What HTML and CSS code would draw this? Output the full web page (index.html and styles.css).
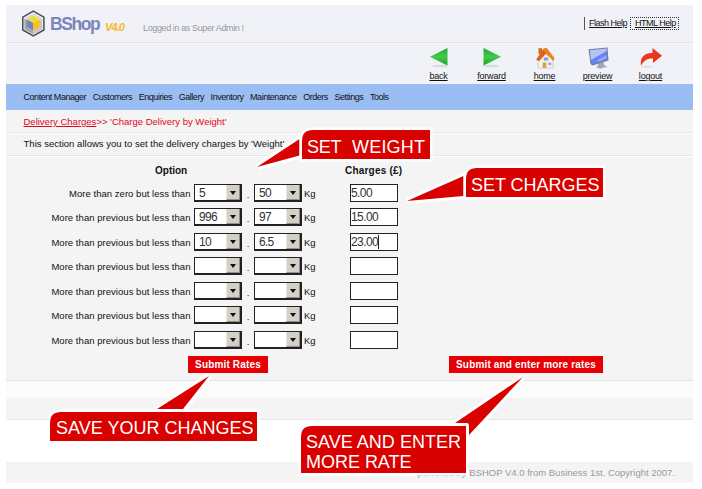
FILE: index.html
```html
<!DOCTYPE html>
<html lang="en">
<head>
<meta charset="utf-8">
<title>BShop V4.0</title>
<link rel="stylesheet" href="styles.css">
</head>
<body>
<div class="page">
  <header class="top">
    <svg class="logo" width="24" height="28" viewBox="0 0 24 28">
      <path d="M11.300 1.200 21.900 7.200V20L11.300 26 .8 20V7.200Z" fill="#f4f4f6" stroke="#4c4c54" stroke-width="1.500"/>
      <path d="M11.300 3 20.300 8 17.800 9.800 11.300 6.300 5 9.800 2.400 8Z" fill="#dcdce0"/>
      <path d="M2.400 8.500 5 10V17.500L11.300 21V24.300L2.400 19.300Z" fill="#a2a2a8"/>
      <path d="M11.300 21 17.800 17.500V10L20.300 8.500V19.300L11.300 24.300Z" fill="#c4c4ca"/>
      <path d="M11.300 5.800 17.800 9.400 11.300 13 5 9.400Z" fill="#e8e02c"/>
      <path d="M5 9.400 11.300 13V20.800L5 17.200Z" fill="#7482c4"/>
      <path d="M17.800 9.400 11.300 13V20.800L17.800 17.200Z" fill="#fdbd17"/>
    </svg>
    <span class="brand">BShop</span><span class="version">V4.0</span>
    <span class="login">Logged in as Super Admin !</span>
    <div class="help"><a class="flash">Flash Help</a><a class="htmlhelp">HTML Help</a></div>
  </header>
  <div class="toolbar">
    <a class="tool"><svg width="24" height="22" viewBox="0 0 24 22"><defs><linearGradient id="g" x1="0" y1="0" x2="0" y2="1"><stop offset="0" stop-color="#22a536"/><stop offset=".5" stop-color="#45c94c"/><stop offset="1" stop-color="#16a32a"/></linearGradient></defs><ellipse cx="13" cy="19" rx="8" ry="1.300" fill="#d9dbde"/><path d="M20.500 1V18.500L3 9.800Z" fill="url(#g)"/></svg><span>back</span></a>
    <a class="tool"><svg width="24" height="22" viewBox="0 0 24 22"><ellipse cx="11" cy="19" rx="8" ry="1.300" fill="#d9dbde"/><path d="M3.500 1V18.500L21 9.800Z" fill="url(#g)"/></svg><span>forward</span></a>
    <a class="tool"><svg width="24" height="22" viewBox="0 0 24 22"><path d="M5 11 12.500 6.500 20 12V21H5Z" fill="#f3f1e9" stroke="#b9b5ae" stroke-width=".6"/><path d="M5.500 1.200H9V7H5.500Z" fill="#d2691e"/><path d="M3.300 12.500 10.500 1.500 13.500 .8 21.500 11 20.500 14 12.800 6.800 6 14Z" fill="#ee8128"/><path d="M3.300 12.500 10.300 2.500 12.800 6.800 6 14Z" fill="#d9641a"/><rect x="10.800" y="10.500" width="4.500" height="3" fill="#7e9fe8"/><rect x="9.700" y="15.500" width="3.600" height="5.500" fill="#d5a14b"/><rect x="15.300" y="15.500" width="3" height="2.500" fill="#8babe9"/></svg><span>home</span></a>
    <a class="tool"><svg width="24" height="22" viewBox="0 0 24 22"><path d="M13 16 17.500 15 18.500 18.500 21.500 19.500 14 21.700 10.500 20.500Z" fill="#a4a7b2"/><path d="M2.500 2.200 21.500 .5 22.500 13.500 6.500 18.500 4.500 17Z" fill="#747b97"/><path d="M3.800 3.300 20.500 1.600 20.800 13 6 17Z" fill="#6583f5"/><path d="M3.800 3.300 20.500 1.600 20.600 4 5 13Z" fill="#b3c4fb"/><path d="M10 14 20.700 8V11L14 14.500Z" fill="#93a9fb"/></svg><span>preview</span></a>
    <a class="tool"><svg width="24" height="22" viewBox="0 0 24 22"><ellipse cx="8" cy="19.800" rx="6" ry="1" fill="#dfdfe3"/><path d="M2 19C.5 10 6 5.700 13.500 6V1L23 8.700 14 16V11.500C8.500 11 4.500 13.500 2 19Z" fill="#e83821"/></svg><span>logout</span></a>
  </div>
  <nav class="menu"><a>Content Manager</a><a>Customers</a><a>Enquiries</a><a>Gallery</a><a>Inventory</a><a>Maintenance</a><a>Orders</a><a>Settings</a><a>Tools</a></nav>
  <div class="crumb"><p><u>Delivery Charges</u>&gt;&gt; 'Charge Delivery by Weight'</p></div>
  <div class="intro"><p>This section allows you to set the delivery charges by 'Weight'.</p></div>
  <main class="form">
    <div class="heads"><b class="h-option">Option</b><b class="h-charges">Charges (£)</b></div>
    <div class="row"><label>More than zero but less than</label><div class="select">5<i></i></div><span class="dot">.</span><div class="select">50<i></i></div><span class="unit">Kg</span><div class="field">5.00</div></div>
    <div class="row"><label>More than previous but less than</label><div class="select">996<i></i></div><span class="dot">.</span><div class="select">97<i></i></div><span class="unit">Kg</span><div class="field">15.00</div></div>
    <div class="row"><label>More than previous but less than</label><div class="select">10<i></i></div><span class="dot">.</span><div class="select">6.5<i></i></div><span class="unit">Kg</span><div class="field"><span class="caret">23.00</span></div></div>
    <div class="row"><label>More than previous but less than</label><div class="select"><i></i></div><span class="dot">.</span><div class="select"><i></i></div><span class="unit">Kg</span><div class="field"></div></div>
    <div class="row"><label>More than previous but less than</label><div class="select"><i></i></div><span class="dot">.</span><div class="select"><i></i></div><span class="unit">Kg</span><div class="field"></div></div>
    <div class="row"><label>More than previous but less than</label><div class="select"><i></i></div><span class="dot">.</span><div class="select"><i></i></div><span class="unit">Kg</span><div class="field"></div></div>
    <div class="row"><label>More than previous but less than</label><div class="select"><i></i></div><span class="dot">.</span><div class="select"><i></i></div><span class="unit">Kg</span><div class="field"></div></div>
    <div class="actions"><a class="btn save">Submit Rates</a><a class="btn more">Submit and enter more rates</a></div>
  </main>
  <div class="strip"></div>
  <div class="band"></div>
  <footer class="foot">powered by BSHOP V4.0 from Business 1st. Copyright 2007.</footer>
</div>
<svg class="callouts" width="702" height="489" viewBox="0 0 702 489">
  <g class="outline">
    <path d="M300 139 257 167 300 155.500Z"/><path d="M464 176 407 201 464 196Z"/>
    <path d="M157 410 209 376 183 410Z"/><path d="M454 424 523 377 468 436Z"/>
  </g>
  <g class="tail">
    <path d="M299.500 139 257 167 299.500 155.500Z"/><path d="M463.500 176 407 201 463.500 196Z"/>
    <path d="M157 409 209 376 183 409Z"/><path d="M455 423 523 377 469 435V425L467 423Z"/>
  </g>
  <g class="box">
    <path d="M302 159V141Q302 130 313 130H430V159Z"/><path d="M466 197V179Q466 168 477 168H603V197Z"/>
    <path d="M50 441V423Q50 412 61 412H257V441Z"/><path d="M301 473V437Q301 426 312 426H466V473Z"/>
  </g>
  <g class="words">
    <text x="307" y="153" textLength="34.500">SET</text><text x="352" y="153" textLength="73">WEIGHT</text>
    <text x="471" y="191" textLength="128.500">SET CHARGES</text>
    <text x="56" y="434" textLength="197.500">SAVE YOUR CHANGES</text>
    <text x="306" y="448" textLength="155">SAVE AND ENTER</text>
    <text x="306" y="468" textLength="105.500">MORE RATE</text>
  </g>
</svg>
</body>
</html>
```
FILE: styles.css
```css
* { box-sizing: border-box; }
body {
  margin: 0;
  width: 702px;
  height: 489px;
  overflow: hidden;
  background: #fff;
  color: #111;
  font-family: "Liberation Sans", Arial, sans-serif;
  font-size: 9.5px;
  white-space: nowrap;
}
p { margin: 0; }
.page { width: 687px; margin-left: 6px; padding-top: 5px; }
.top {
  display: flex;
  height: 38px;
  padding: 5px 14px 0 16px;
  background: #f1f2f7;
  border-bottom: 1px solid #e2e3e7;
}
.logo { flex: none; }
.brand {
  width: 55px;
  margin-left: 4px;
  padding-top: 4px;
  color: #7c86bd;
  font-size: 17.5px;
  font-weight: bold;
  letter-spacing: -1.4px;
  line-height: 21px;
}
.version {
  width: 38px;
  padding-top: 11px;
  color: #fbb62a;
  font-size: 11px;
  font-weight: bold;
  font-style: italic;
  letter-spacing: -.9px;
  line-height: 13px;
}
.login { padding-top: 12px; color: #96979c; font-size: 9px; letter-spacing: -.38px; line-height: 12px; }
.help { display: flex; margin-left: auto; padding-top: 7px; font-size: 9px; letter-spacing: -.5px; text-decoration: underline; }
.help a { height: 13px; line-height: 13px; }
.flash { width: 46px; padding-left: 4px; border-left: 1px solid #555; }
.htmlhelp { width: 49px; padding-left: 4px; border: 1px dotted #333; line-height: 11px !important; }
.toolbar {
  display: flex;
  justify-content: flex-end;
  height: 41px;
  padding: 3px 16px 0 0;
  background: #f1f2f7;
  border-top: 1px solid #f9f9fb;
}
.tool {
  display: flex;
  flex-direction: column;
  align-items: center;
  width: 53px;
  font-size: 9px;
  letter-spacing: -.2px;
  line-height: 11px;
  text-decoration: underline;
}
.tool svg { margin-bottom: 2px; }
.menu {
  display: flex;
  gap: 6.600px;
  height: 26px;
  padding-left: 17.500px;
  background: #9abdf3;
  font-size: 9px;
  letter-spacing: -.46px;
  line-height: 26px;
}
.crumb, .intro { padding-left: 17.500px; background: #f4f4f4; border-bottom: 1px solid #e6e6e6; line-height: 23px; }
.crumb { height: 23px; color: #e2061b; }
.intro { height: 23px; border-top: 1px solid #fff; line-height: 20px; letter-spacing: .02px; }
.form { height: 225px; background: #f4f4f4; border-top: 1px solid #fff; border-bottom: 1px solid #e3e3e3; }
.heads { display: flex; height: 26.500px; padding-left: 149px; font-size: 10px; line-height: 28px; }
.h-option { width: 190px; }
.h-charges { letter-spacing: .2px; }
.row {
  display: grid;
  grid-template-columns: 185px 48px 12px 48px 48px 48px;
  height: 24.600px;
  padding-left: 3px;
  line-height: 19px;
}
.row label { padding-right: 3.500px; text-align: right; letter-spacing: .04px; }
.select, .field {
  height: 18px;
  border: 1px solid #222;
  background: #fff;
  color: #333;
  font-size: 12px;
  letter-spacing: -.7px;
  line-height: 17px;
}
.select { display: flex; justify-content: space-between; padding-left: 4px; border-width: 1px 2px 2px 1px; }
.select i { width: 14px; margin-left: auto; background: #d4d0c8; border-left: 1px solid #e9e7e2; border-right: 1px solid #918e88; border-bottom: 1px solid #918e88; }
.select i::before {
  content: "";
  display: block;
  margin: 6px auto 0;
  width: 0;
  border: 3.500px solid transparent;
  border-top: 4px solid #111;
  border-bottom: 0;
}
.dot { text-align: center; line-height: 21px; }
.unit { padding-left: 2px; }
.field { letter-spacing: -.6px; }
.caret { display: inline-block; height: 14px; line-height: 15px; border-right: 1px solid #222; vertical-align: top; margin-top: 1px; }
.actions { display: flex; justify-content: space-between; padding: .6px 90px 0 182px; }
.btn { height: 17px; background: #e60005; color: #fff; font-weight: bold; font-size: 10px; letter-spacing: .16px; line-height: 17px; text-align: center; }
.save { width: 80px; }
.more { width: 154px; }
.strip { height: 17px; background: #fbfbfb; }
.band { height: 22px; background: #f4f4f4; border-bottom: 1px solid #e8e8e8; }
.foot { height: 21px; margin-top: 42px; padding-right: 18px; background: #f5f4f4; color: #999; line-height: 22px; text-align: right; }
.callouts { position: absolute; left: 0; top: 0; }
.outline { fill: #fff; stroke: #fff; stroke-width: 6px; stroke-linejoin: miter; stroke-miterlimit: 2; }
.tail { fill: #d90000; }
.box { fill: #d90000; stroke: #fff; stroke-width: 5px; paint-order: stroke; }
.words { fill: #fff; font-size: 18px; }
```
